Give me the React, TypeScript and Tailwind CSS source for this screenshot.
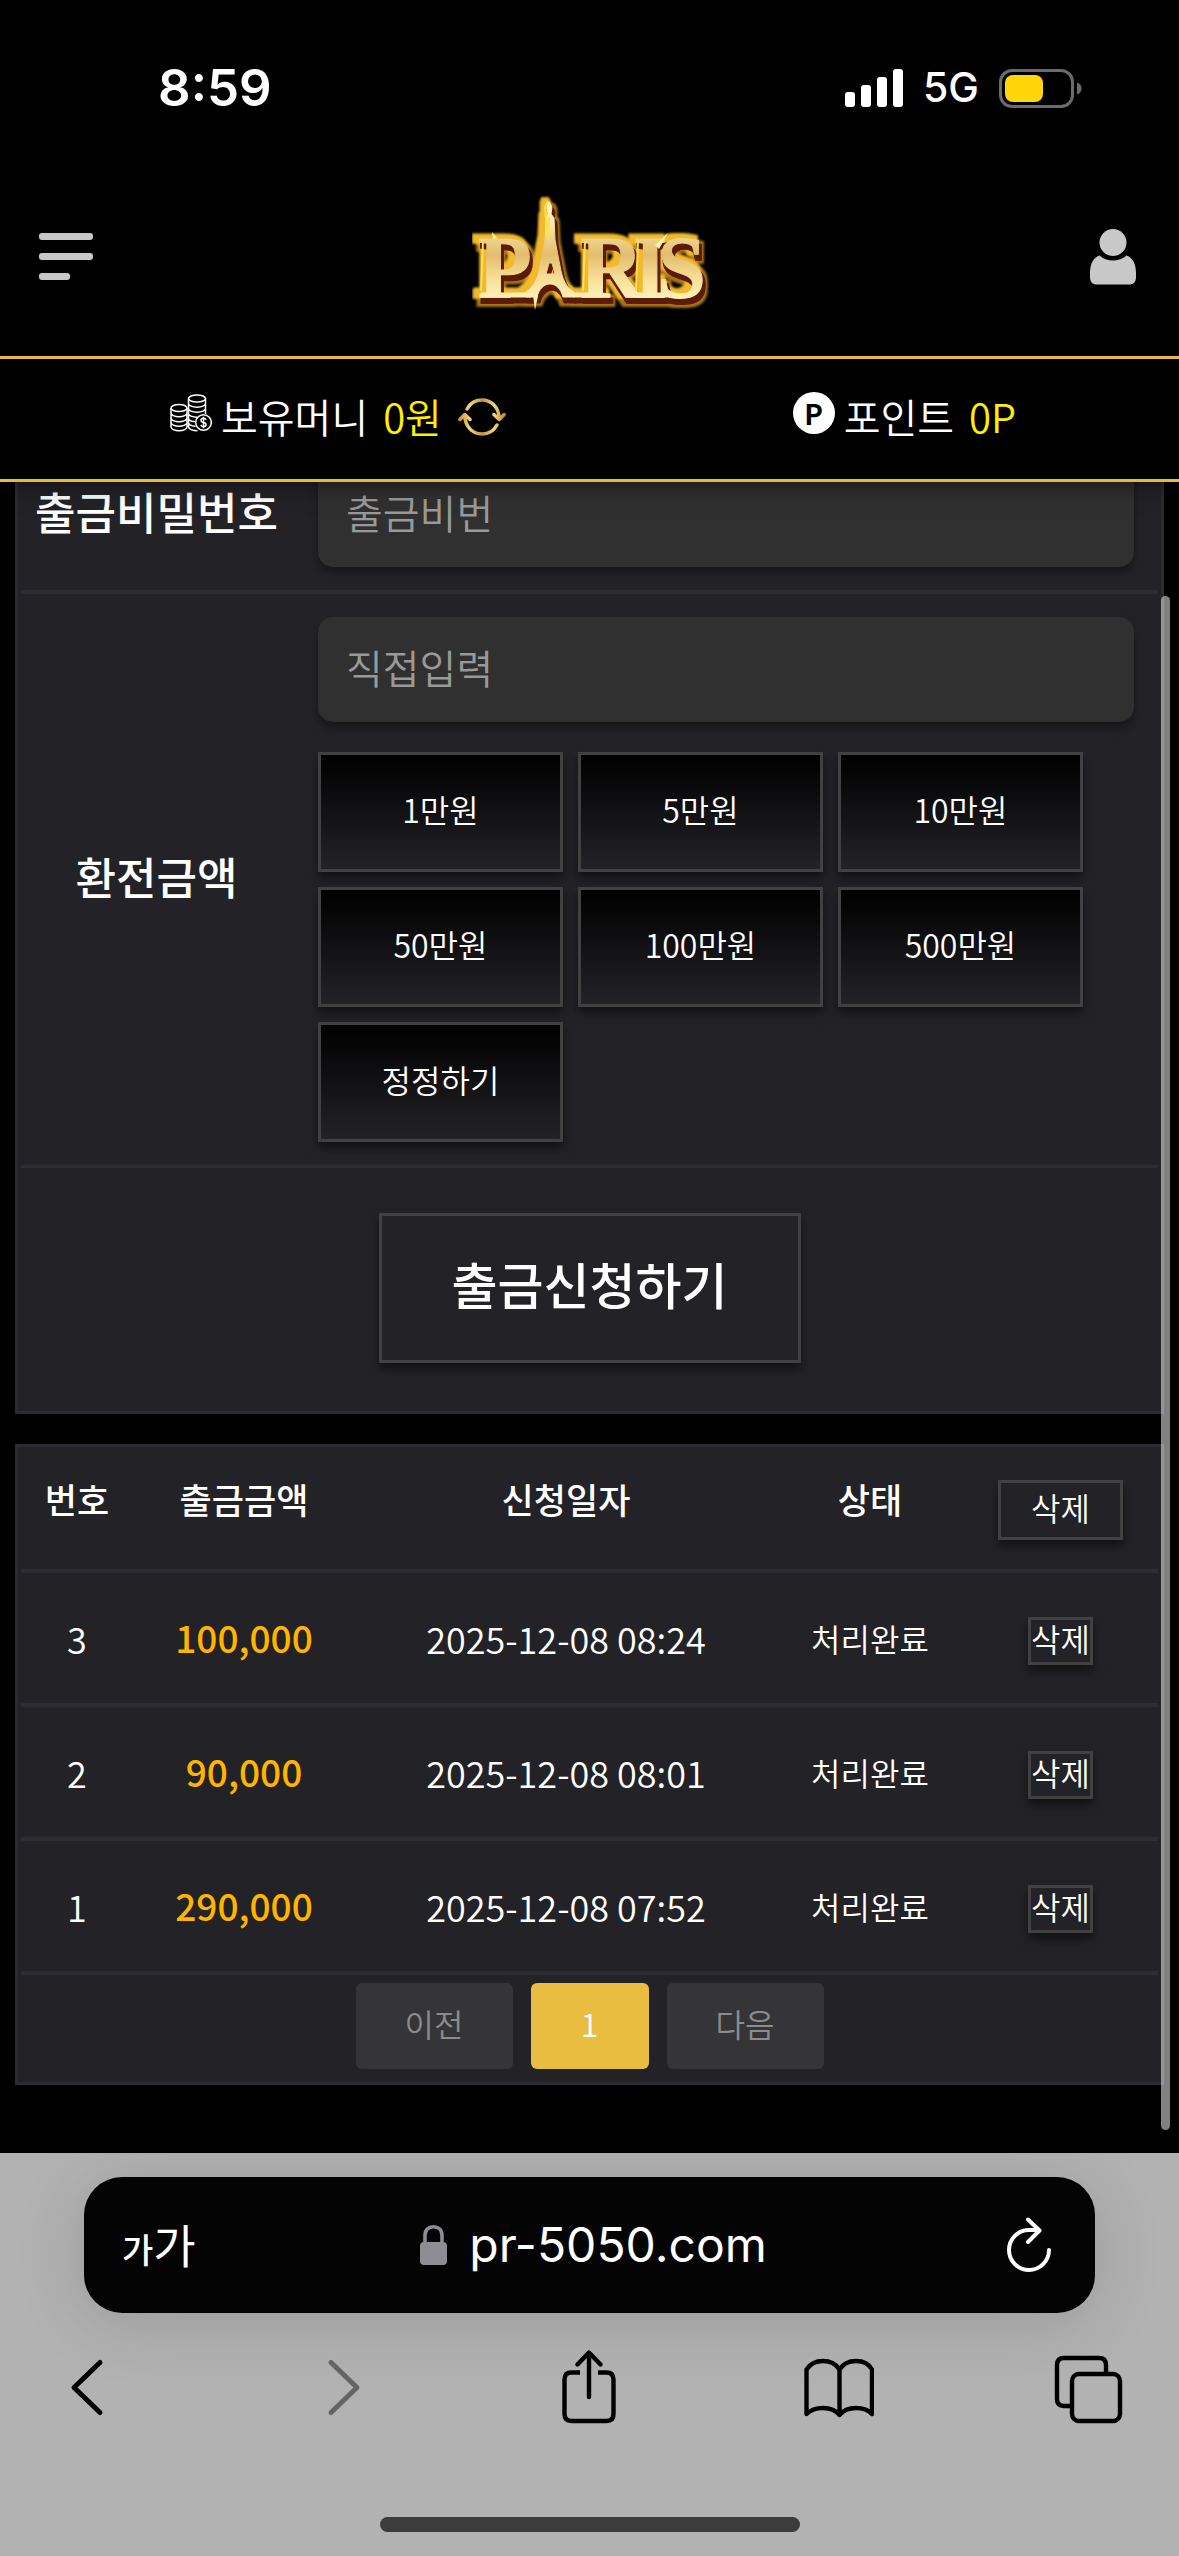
import { useState } from "react";

type Withdrawal = {
  id: number;
  amount: number;
  requestedAt: string;
  status: string;
};

const WITHDRAWALS: Withdrawal[] = [
  { id: 3, amount: 100000, requestedAt: "2025-12-08 08:24", status: "처리완료" },
  { id: 2, amount: 90000, requestedAt: "2025-12-08 08:01", status: "처리완료" },
  { id: 1, amount: 290000, requestedAt: "2025-12-08 07:52", status: "처리완료" },
];

const PRESETS = [
  { label: "1만원", value: 10000 },
  { label: "5만원", value: 50000 },
  { label: "10만원", value: 100000 },
  { label: "50만원", value: 500000 },
  { label: "100만원", value: 1000000 },
  { label: "500만원", value: 5000000 },
];

const boxShadow = "shadow-[0_6px_9px_rgba(0,0,0,0.5)]";
const inputClass =
  "block h-[105px] w-full rounded-[15px] bg-[#303030] px-[28px] pb-[6px] text-[40px] font-[350] text-white placeholder:text-[#999] placeholder:opacity-100 focus:outline-none shadow-[0_6px_9px_rgba(0,0,0,0.35)]";
const labelClass =
  "w-[273px] pr-[2px] pb-[8px] text-center text-[44px] leading-none font-medium whitespace-nowrap text-white";
const presetClass = `h-[120px] border-[3px] border-[#414141] bg-linear-to-b/srgb from-black to-[#232227] pb-[6px] text-[32px] font-[350] text-white ${boxShadow}`;
const deleteClass = `border-[3px] border-[#414141] pb-[6px] text-[32px] leading-none font-[350] text-white ${boxShadow}`;

function StatusBar() {
  return (
    <div className="flex h-[158px] items-center justify-between pt-[18px] pr-[97px] pl-[158px] font-[Inter,sans-serif] text-white">
      <span className="text-[51px] font-semibold">8:59</span>
      <div className="flex items-center gap-[20px]">
        <svg width="58" height="38" viewBox="0 0 58 38" fill="#fff">
          <rect x="0" y="23" width="10" height="15" rx="3" />
          <rect x="16" y="16" width="10" height="22" rx="3" />
          <rect x="32" y="8" width="10" height="30" rx="3" />
          <rect x="48" y="0" width="10" height="38" rx="3" />
        </svg>
        <span className="text-[41px] font-medium">5G</span>
        <svg width="83" height="39" viewBox="0 0 83 39">
          <rect x="1.5" y="1.5" width="72" height="36" rx="11.5" fill="none" stroke="#6b6b6b" strokeWidth="3" />
          <rect x="6" y="6" width="38" height="27" rx="8" fill="#ffd60a" />
          <path d="M78 13.5c3 1 4.500 3.300 4.500 6s-1.500 5-4.500 6z" fill="#6b6b6b" />
        </svg>
      </div>
    </div>
  );
}

function Logo() {
  return (
    <svg
      width="240"
      height="124"
      viewBox="3 -2 240 124"
      role="img"
      aria-label="PARIS"
      className="font-['Liberation_Serif',serif] text-[88px] font-bold"
    >
      <defs>
        <linearGradient id="gold" gradientUnits="userSpaceOnUse" x1="0" y1="20" x2="0" y2="104">
          <stop offset="0" stopColor="#fff0b5" />
          <stop offset="0.45" stopColor="#e3bd6e" />
          <stop offset="0.75" stopColor="#f9e09a" />
          <stop offset="1" stopColor="#fff3bf" />
        </linearGradient>
        {/* dark outer glow, bright gold rim, brown extrusion, letters on top */}
        <filter id="bevel" x="-10%" y="-10%" width="120%" height="130%" colorInterpolationFilters="sRGB">
          <feMorphology in="SourceAlpha" operator="dilate" radius="4" result="wide" />
          <feOffset in="wide" dx="1" dy="5" />
          <feGaussianBlur stdDeviation="1.200" result="outer" />
          <feFlood floodColor="#a87414" />
          <feComposite in2="outer" operator="in" result="outerGold" />
          <feMorphology in="SourceAlpha" operator="dilate" radius="3" result="mid" />
          <feOffset in="mid" dx="-4" dy="-2" />
          <feGaussianBlur stdDeviation="0.800" result="rimShape" />
          <feFlood floodColor="#f0b92e" />
          <feComposite in2="rimShape" operator="in" result="rim" />
          <feMorphology in="SourceAlpha" operator="dilate" radius="1" result="thin" />
          <feOffset in="thin" dx="2" dy="5" />
          <feGaussianBlur stdDeviation="0.700" result="depthShape" />
          <feFlood floodColor="#5c1a0b" />
          <feComposite in2="depthShape" operator="in" result="depth" />
          <feMerge>
            <feMergeNode in="outerGold" />
            <feMergeNode in="rim" />
            <feMergeNode in="depth" />
            <feMergeNode in="SourceGraphic" />
          </feMerge>
        </filter>
      </defs>
      <g fill="url(#gold)" stroke="url(#gold)" strokeWidth="1" filter="url(#bevel)">
        <text x="9" y="100">P</text>
        <text x="111 164 188" y="100">RIS</text>
        <path
          fillRule="evenodd"
          d="M80 5l3 5-1 7 3 4 1 22 5 26c2 12 6 22 14 26v5H94c-2-8-7-13-13-13s-11 5-13 13H57v-5c8-5 12-14 14-26l5-26 1-22 2-4-1-7zM80 66l-3 11h9l-3-11z"
        />
        <path d="M12 96h50v4H12zM104 96h28v4h-28zM160 96h38v4h-38z" />
      </g>
      <path d="M79 4l-3 6 1 12 2 20 1-22M14 44l-2 50M116 44l-2 50M169 44l-2 50" stroke="#ffe052" strokeWidth="2" fill="none" />
      <path d="M186 48l13-12-9 16zM24 42l-1-7 5 6zM64 98l2 15 3-14z" fill="#fff3a8" />
    </svg>
  );
}

function CoinsIcon() {
  return (
    <svg width="42" height="38" viewBox="0 0 42 38" fill="none" stroke="#fff" strokeWidth="1.500" className="mb-3">
      <ellipse cx="9" cy="14" rx="8" ry="3.600" />
      <path d="M1 14v19c0 2 3.600 3.800 8 3.800s8-1.800 8-3.800V14M1 19c0 2 3.600 3.700 8 3.700s8-1.700 8-3.700M1 24c0 2 3.600 3.700 8 3.700s8-1.700 8-3.700M1 28.500c0 2 3.600 3.700 8 3.700s8-1.700 8-3.700" />
      <ellipse cx="27" cy="4.500" rx="8.500" ry="3.600" />
      <path d="M18.500 4.500v28c0 2.500 4 4.300 9 4.300M35.500 4.500V20M18.500 9.500c0 2 3.800 3.700 8.500 3.700s8.500-1.700 8.500-3.700M18.500 14.500c0 2 3.800 3.700 8.500 3.700s8.500-1.700 8.500-3.700M18.500 19.500c0 2 3.800 3.700 8.500 3.700M18.500 24c0 2 3 3.500 7 3.700M18.500 28.500c0 2 3 3.500 7 3.700" />
      <circle cx="33.500" cy="28.500" r="7.800" fill="#000" />
      <path d="M36 26c-.4-1.100-1.300-1.700-2.500-1.700-3.300 0-3.300 3.800 0 4.200 3.400.4 3.400 4.300 0 4.300-1.300 0-2.300-.7-2.600-1.900M33.500 22.800v11.400" />
    </svg>
  );
}

function RefreshGoldIcon() {
  return (
    <svg width="48" height="38" viewBox="0 0 48 38" fill="none" stroke="url(#refreshGold)" strokeWidth="3.500" strokeLinecap="round" strokeLinejoin="round">
      <defs>
        <linearGradient id="refreshGold" gradientUnits="userSpaceOnUse" x1="0" y1="0" x2="48" y2="0">
          <stop offset="0" stopColor="#c08a3a" />
          <stop offset="0.25" stopColor="#f3d877" />
          <stop offset="0.5" stopColor="#c0914a" />
          <stop offset="0.75" stopColor="#f3d877" />
          <stop offset="1" stopColor="#b9802f" />
        </linearGradient>
      </defs>
      <path d="M9 11C12 5.500 17.500 2 24 2c9.500 0 17 7.500 17.200 18.500M36 16.500l5.200 5 5-5" />
      <path d="M39 27c-3 5.500-8.500 9-15 9C14.500 36 7 28.500 6.800 17.500M1.800 21.500l5-5 5.200 5" />
    </svg>
  );
}

function SiteHeader() {
  return (
    <header className="relative z-10 bg-black shadow-[0_0_24px_rgba(0,0,0,0.6)]">
      <StatusBar />
      <div className="flex h-[198px] items-center justify-between pr-[43px] pl-[39px]">
        <button aria-label="메뉴">
          <svg width="54" height="48" viewBox="0 0 54 48" fill="#c8c8c8">
            <rect x="0" y="0" width="54" height="7" rx="3" />
            <rect x="0" y="20" width="54" height="7" rx="3" />
            <rect x="0" y="40" width="31" height="7" rx="3" />
          </svg>
        </button>
        <a href="#">
          <Logo />
        </a>
        <button aria-label="내 정보">
          <svg width="46" height="56" viewBox="0 0 46 56" fill="#c8c8c8">
            <circle cx="23" cy="13.500" r="13.500" />
            <path d="M9.500 26.500C13 30 18 31.500 23 31.500s10-1.500 13.500-5c6.500 2 9.500 9 9.500 17.500v4c0 5-2.500 7.500-7 7.500H7c-4.500 0-7-2.500-7-7.500v-4c0-8.500 3-15.500 9.500-17.500z" />
          </svg>
        </button>
      </div>
      <div className="flex h-[126px] items-center justify-between border-y-[3px] border-[#e8b93a] pr-[163px] pl-[170px] text-[40px] font-[350] whitespace-nowrap text-white">
        <div className="flex items-center">
          <CoinsIcon />
          <span className="ml-[9px] pb-[6px]">
            보유머니 <span className="ml-[6px] text-[#ffef00]">0원</span>
          </span>
          <button aria-label="새로고침" className="ml-4 pb-1">
            <RefreshGoldIcon />
          </button>
        </div>
        <div className="flex items-center">
          <span className="mb-3 flex size-[42px] items-center justify-center rounded-full bg-white text-[28px] leading-none font-bold text-black">
            P
          </span>
          <span className="ml-[9px] pb-[6px]">
            포인트 <span className="ml-[6px] text-[#ffef00]">0P</span>
          </span>
        </div>
      </div>
    </header>
  );
}

function WithdrawForm() {
  const [amount, setAmount] = useState("");

  function handleAdd(value: number) {
    setAmount((prev) => String(Number(prev || 0) + value));
  }

  return (
    <form
      onSubmit={(e) => e.preventDefault()}
      className="-mt-[49px] border-[3px] border-[#2b2b31] bg-[#232227] p-[3px]"
    >
      <div className="flex items-center border-b-4 border-[#2c2d32] py-[23px] pr-[24px]">
        <label htmlFor="pin" className={labelClass}>
          출금비밀번호
        </label>
        <div className="flex-1 pl-[24px]">
          <input id="pin" type="password" placeholder="출금비번" className={inputClass} />
        </div>
      </div>
      <div className="flex items-center border-b-[3px] border-[#2c2d32] py-[23px] pr-[24px]">
        <label htmlFor="amount" className={labelClass}>
          환전금액
        </label>
        <div className="flex-1 pl-[24px]">
          <input
            id="amount"
            type="text"
            inputMode="numeric"
            placeholder="직접입력"
            value={amount}
            onChange={(e) => setAmount(e.target.value)}
            className={inputClass}
          />
          <div className="mt-[30px] mr-[51px] grid grid-cols-3 gap-[15px]">
            {PRESETS.map((p) => (
              <button key={p.label} type="button" onClick={() => handleAdd(p.value)} className={presetClass}>
                {p.label}
              </button>
            ))}
            <button type="button" onClick={() => setAmount("")} className={presetClass}>
              정정하기
            </button>
          </div>
        </div>
      </div>
      <div className="flex justify-center py-[45px]">
        <button
          type="submit"
          className={`h-[150px] border-[3px] border-[#414141] px-[70px] pb-[10px] text-[50px] font-medium text-white ${boxShadow}`}
        >
          출금신청하기
        </button>
      </div>
    </form>
  );
}

function WithdrawHistory() {
  const [rows, setRows] = useState(WITHDRAWALS);

  return (
    <section className="mt-[30px] border-[3px] border-[#2b2b31] bg-[#232227] p-[3px] text-white">
      <table className="w-full table-fixed border-separate border-spacing-0 text-center">
        <thead>
          <tr className="h-[123px] text-[35px] *:border-b-4 *:border-[#2c2d32] *:font-medium">
            <th className="w-[112px] pb-5">번호</th>
            <th className="w-[222px] pb-5">출금금액</th>
            <th className="pb-5">신청일자</th>
            <th className="w-[186px] pb-5">상태</th>
            <th className="w-[195px]">
              <button onClick={() => setRows([])} className={`h-[60px] px-[30px] ${deleteClass}`}>
                삭제
              </button>
            </th>
          </tr>
        </thead>
        <tbody>
          {rows.map((r) => (
            <tr key={r.id} className="h-[134px] *:border-b-4 *:border-[#2c2d32]">
              <td className="text-[36px] font-[350]">{r.id}</td>
              <td className="text-[37px] font-medium text-[#ffb400]">{r.amount.toLocaleString("en-US")}</td>
              <td className="text-[36px] font-[350]">{r.requestedAt}</td>
              <td className="text-[32px] font-[350]">{r.status}</td>
              <td className="pt-[6px]">
                <button
                  onClick={() => setRows((prev) => prev.filter((x) => x.id !== r.id))}
                  className={`h-[48px] ${deleteClass}`}
                >
                  삭제
                </button>
              </td>
            </tr>
          ))}
        </tbody>
      </table>
      <div className="flex justify-center gap-[18px] pt-2 pb-[10px] text-[32px] font-[350] *:pb-[6px]">
        <button disabled className="h-[86px] w-[157px] rounded-md bg-[#353537] text-[#8c8c8c]">
          이전
        </button>
        <button className="h-[86px] w-[118px] rounded-md bg-[#e9bd3f] text-white">1</button>
        <button disabled className="h-[86px] w-[157px] rounded-md bg-[#353537] text-[#8c8c8c]">
          다음
        </button>
      </div>
    </section>
  );
}

function BrowserBar() {
  return (
    <footer className="bg-[#b2b2b2] pt-[24px] pb-[24px]">
      <div className="mx-[84px] flex h-[136px] items-center rounded-[38px] bg-[#040404] pr-[44px] pl-[38px] text-white shadow-[0_8px_70px_rgba(0,0,0,0.14)]">
        <button className="flex w-[76px] items-baseline pb-1 whitespace-nowrap">
          <span className="text-[34px] font-medium">가</span>
          <span className="text-[46px]">가</span>
        </button>
        <a href="#" className="flex flex-1 items-center justify-center gap-[22px] pr-[18px] font-[Inter,sans-serif] text-[48px]">
          <svg width="27" height="40" viewBox="0 0 27 40">
            <rect x="0" y="17" width="27" height="23" rx="4" fill="#8e8d93" />
            <path d="M5 19v-8.500C5 5 8.500 1.800 13.500 1.800S22 5 22 10.500V19" fill="none" stroke="#8e8d93" strokeWidth="3.600" />
          </svg>
          pr-5050.com
        </a>
        <button aria-label="새로고침">
          <svg width="44" height="56" viewBox="0 0 44 56" fill="none" stroke="#fff" strokeWidth="4" strokeLinecap="round" strokeLinejoin="round">
            <path d="M42 33a20 20 0 1 1-20-20h9M21 2.500L32.500 13.500 21 25" />
          </svg>
        </button>
      </div>
      <nav className="mt-[37px] flex h-[76px] items-center justify-between pr-[55px] pl-[51px]">
        <button aria-label="뒤로">
          <svg width="72" height="76" viewBox="0 0 72 76" fill="none" stroke="#000" strokeWidth="5" strokeLinecap="round" strokeLinejoin="round">
            <path d="M49 12.500L23 37.500l26 25" />
          </svg>
        </button>
        <button aria-label="앞으로" disabled>
          <svg width="72" height="76" viewBox="0 0 72 76" fill="none" stroke="#656565" strokeWidth="5" strokeLinecap="round" strokeLinejoin="round">
            <path d="M30 12.500l26 25-26 25" />
          </svg>
        </button>
        <button aria-label="공유">
          <svg width="72" height="76" viewBox="0 0 72 76" fill="none" stroke="#000" strokeWidth="4.400" strokeLinejoin="round">
            <path d="M28 22.500h-8.500c-4.500 0-7 2.500-7 7v34.500c0 4.500 2.500 7 7 7h35c4.500 0 7-2.500 7-7V29.500c0-4.500-2.500-7-7-7H46" />
            <path d="M37 47V3M25.500 14.500L37 2.500l11.500 12" strokeLinecap="round" />
          </svg>
        </button>
        <button aria-label="책갈피">
          <svg width="72" height="76" viewBox="0 0 72 76" fill="none" stroke="#000" strokeWidth="4.400" strokeLinejoin="round" strokeLinecap="round">
            <path d="M37.500 19.500C34 14 28.500 11 21 11S8 14 4.500 19.500V64C8 60.500 14 58 21 58s13 2.500 16.500 7C41 60.500 47 58 54 58s13 2.500 16 6V19.500C67 14 61 11 54 11s-13 3-16.500 8.500zV65" />
          </svg>
        </button>
        <button aria-label="탭">
          <svg width="72" height="76" viewBox="0 0 72 76" fill="none" stroke="#000" strokeWidth="4.400">
            <rect x="20" y="24" width="48" height="47" rx="7" />
            <path d="M54 23v-8c0-4.500-2.500-7-7-7H12c-4.500 0-7 2.500-7 7v34c0 4.500 2.500 7 7 7h8" />
          </svg>
        </button>
      </nav>
      <div className="mx-auto mt-[91px] h-[15px] w-[420px] rounded-full bg-[#3c3c3c]" />
    </footer>
  );
}

export default function App() {
  return (
    <div className="flex min-h-screen flex-col bg-black font-['Noto_Sans_CJK_KR',sans-serif]">
      <SiteHeader />
      <main className="relative flex-1 overflow-hidden px-[15px] pb-[68px]">
        <WithdrawForm />
        <WithdrawHistory />
        {/* scroll thumb floats over the panel edge */}
        <div className="absolute top-[114px] right-[9px] bottom-[23px] w-[9px] rounded-full bg-white/50" />
      </main>
      <BrowserBar />
    </div>
  );
}
